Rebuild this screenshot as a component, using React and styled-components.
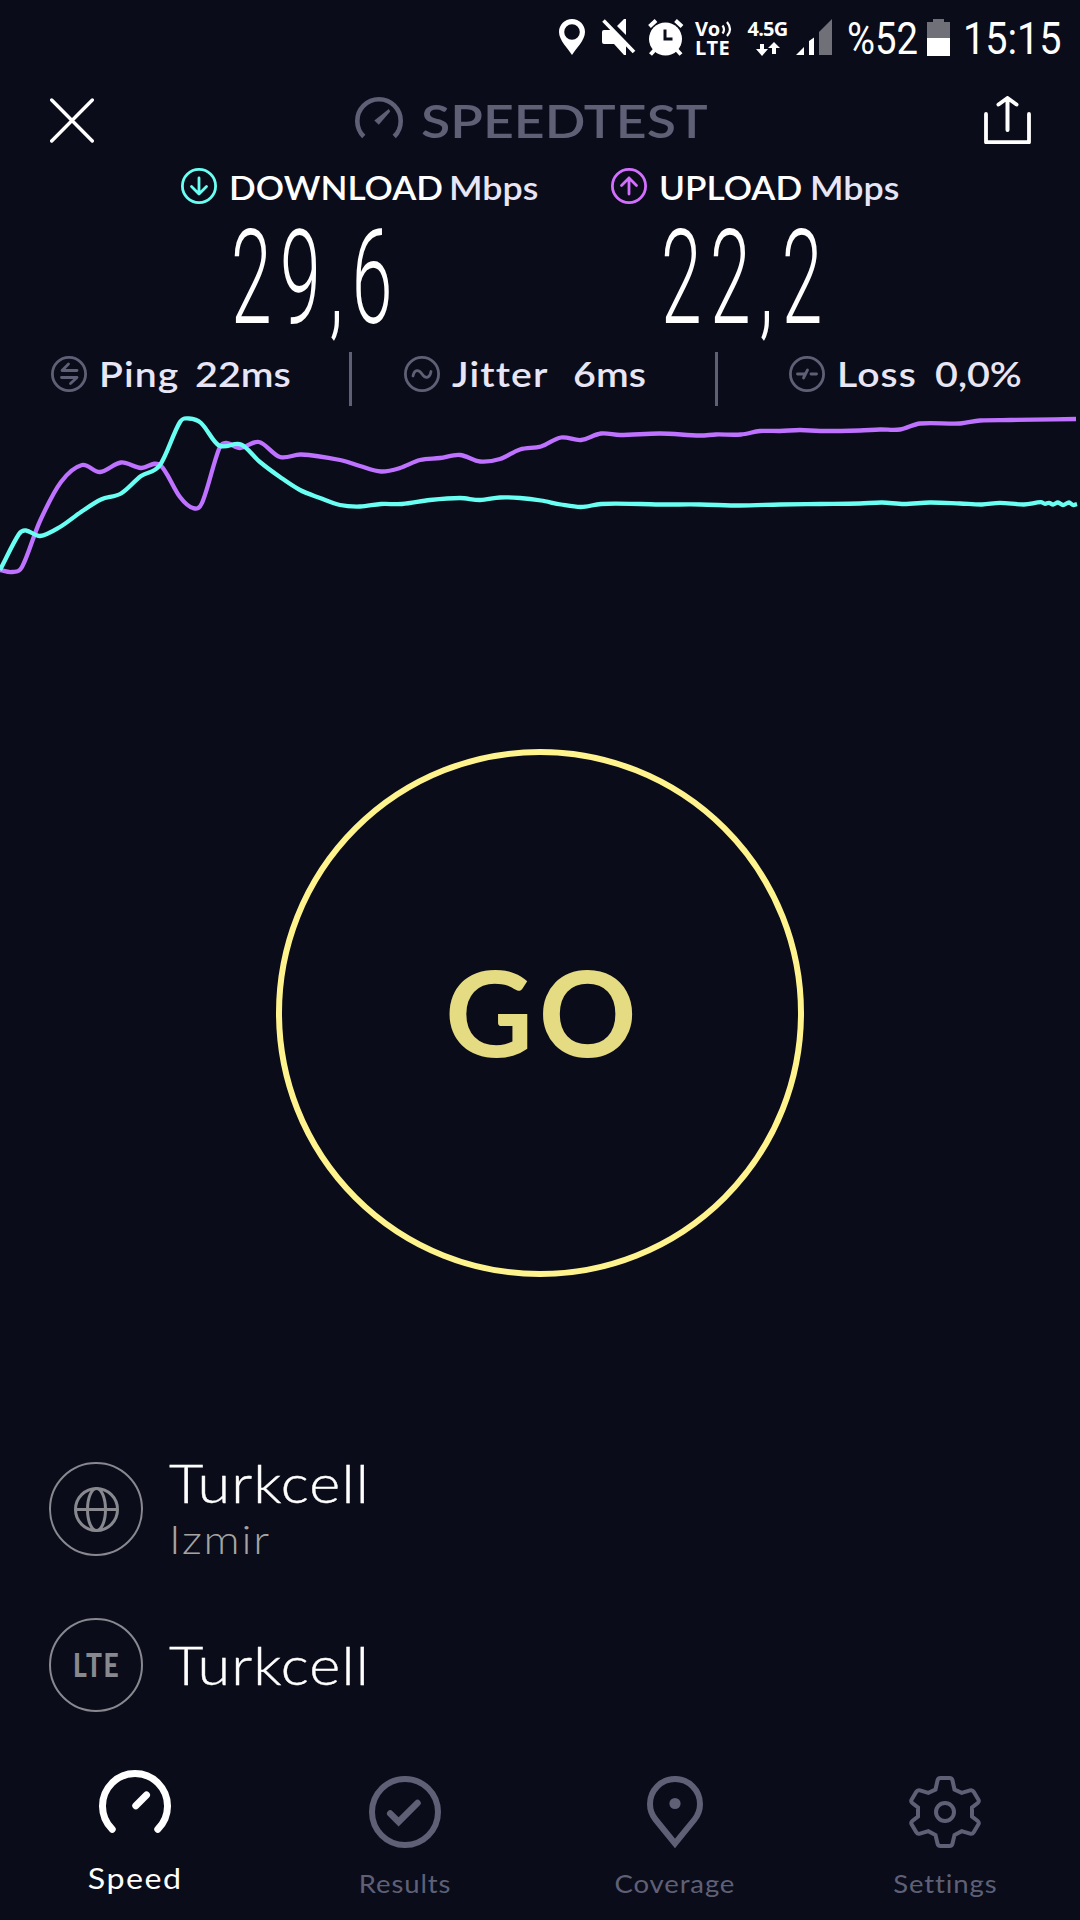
import styled, { createGlobalStyle } from "styled-components";

const colors = {
    background: "#0a0c1a",
    white: "#ffffff",
    soft: "#e8e6f6",
    muted: "#5f6076",
    gray: "#88888f",
    izmir: "#a5a4a2",
    download: "#6afff3",
    upload: "#bf71ff",
    uploadIcon: "#d36fff",
    ring: "#fff38e",
    go: "#e5db82",
};

const GlobalStyle = createGlobalStyle`
    * {
        box-sizing: border-box;
        margin: 0;
        padding: 0;
    }

    body {
        background-color: ${colors.background};
        font-family: Lato, "Liberation Sans", sans-serif;
    }

    svg {
        display: block;
        flex-shrink: 0;
    }
`

const Screen = styled.div`
    width: 1080px;
    height: 1920px;
    display: flex;
    flex-direction: column;
    overflow: hidden;
    background-color: ${colors.background};
`

// Wide geometric lettering: Lato is a little narrow, so it is stretched
const Label = styled.span`
    display: block;
    flex-shrink: 0;
    width: ${(props) => props.$width}px;
    font-size: ${(props) => props.$size}px;
    font-weight: ${(props) => props.$weight || 600};
    line-height: 1.2;
    color: ${(props) => props.$color || colors.white};
    white-space: nowrap;
    letter-spacing: ${(props) => props.$spacing || 0}px;
    transform: scaleX(${(props) => props.$stretch || 1.08});
    transform-origin: left center;
`

const StatusBar = styled.div`
    height: 74px;
    display: flex;
    align-items: center;
    padding-left: 559px;
`

const StatusIcon = styled.div`
    margin-right: ${(props) => props.$gap}px;
`

const StatusStack = styled.div`
    width: ${(props) => props.$width}px;
    height: 38px;
    padding-top: 3px;
    margin-right: ${(props) => props.$gap}px;
    display: flex;
    flex-direction: column;
    justify-content: space-between;
    align-items: ${(props) => props.$align || "flex-start"};
`

const StatusTiny = styled.div`
    display: flex;
    gap: 1px;
    height: 16px;
    font-family: "Open Sans", sans-serif;
    font-size: 20px;
    line-height: 16px;
    font-weight: 700;
    letter-spacing: ${(props) => props.$spacing || 0}px;
    color: ${colors.white};
`

const StatusText = styled.span`
    display: block;
    width: ${(props) => props.$width}px;
    margin-right: ${(props) => props.$gap || 0}px;
    padding-top: 3px;
    font-family: Roboto, sans-serif;
    font-size: 45px;
    line-height: 54px;
    color: ${colors.white};
    white-space: nowrap;
    transform: scaleX(${(props) => props.$stretch});
    transform-origin: left center;
`

const Header = styled.header`
    height: 92px;
    display: flex;
    align-items: center;
    justify-content: space-between;
    padding: 0 48px 0 50px;
`

const Brand = styled.div`
    display: flex;
    align-items: center;
    gap: 18px;
    margin-right: 17px;
`

const Results = styled.section`
    display: flex;
    padding-left: 181px;
`

const Result = styled.div`
    width: 430px;
`

const ResultTitle = styled.div`
    height: 40px;
    display: flex;
    align-items: center;
`

const ResultName = styled.div`
    display: flex;
    padding: 5px 0 0 12px;
`

const ResultValue = styled.p`
    margin: 24px 0 0 50px;
    height: 97px;
    font-family: Roboto, sans-serif;
    font-size: 131px;
    font-weight: 300;
    line-height: 97px;
    letter-spacing: 15px;
    color: ${colors.white};
    white-space: nowrap;
    transform: scaleX(0.56);
    transform-origin: left center;
`

const Stats = styled.section`
    height: 54px;
    margin-top: 25px;
    display: flex;
    padding-left: 51px;
`

const Stat = styled.div`
    width: ${(props) => props.$width}px;
    height: 44px;
    display: flex;
    align-items: center;
`

const StatName = styled(Label).attrs({ $size: 34, $color: colors.soft, $stretch: 1.15, $spacing: 1 })`
    margin-left: 12px;
`

const StatValue = styled(Label).attrs({ $size: 34, $color: colors.soft, $stretch: 1.16 })``

const Divider = styled.div`
    width: 3px;
    height: 54px;
    margin-right: ${(props) => props.$gap}px;
    background-color: ${colors.muted};
`

const ChartArea = styled.section`
    height: 184px;
`

const GoArea = styled.section`
    display: flex;
    justify-content: center;
    padding-top: 159px;
`

const GoButton = styled.button`
    width: 528px;
    height: 528px;
    display: flex;
    align-items: center;
    justify-content: center;
    padding-bottom: 3px;
    border: 6px solid ${colors.ring};
    border-radius: 50%;
    background: none;
    font-family: inherit;
    text-align: left;
`

const Servers = styled.section`
    margin-top: 185px;
    padding-left: 49px;
    display: flex;
    flex-direction: column;
    gap: 62px;
`

const Server = styled.div`
    height: 94px;
    display: flex;
    align-items: center;
    gap: 26px;
`

const Badge = styled.div`
    width: 94px;
    height: 94px;
    display: flex;
    align-items: center;
    justify-content: center;
    border: 2px solid ${colors.gray};
    border-radius: 50%;
`

const ServerText = styled.div`
    display: flex;
    flex-direction: column;
    padding-bottom: ${(props) => props.$lift || 0}px;
`

const ServerName = styled(Label).attrs({ $size: 53, $width: 200, $weight: 300, $stretch: 1.12, $spacing: 1 })`
    -webkit-text-stroke: 0.4px ${colors.white};
`

const ServerPlace = styled(Label).attrs({ $size: 40, $width: 100, $weight: 300, $stretch: 1.12, $spacing: 1.6, $color: colors.izmir })`
    margin-top: 1px;
`

const Nav = styled.nav`
    margin-top: 58px;
    height: 150px;
    display: grid;
    grid-template-columns: repeat(4, 1fr);
`

const NavItem = styled.div`
    display: flex;
    flex-direction: column;
    align-items: center;
    gap: ${(props) => (props.$active ? 28 : 18)}px;
    padding-top: ${(props) => (props.$active ? 0 : 6)}px;
`

const NavLabel = styled.span`
    font-size: ${(props) => (props.$active ? 28 : 25)}px;
    line-height: 34px;
    color: ${(props) => (props.$active ? colors.white : colors.muted)};
    letter-spacing: ${(props) => (props.$active ? 1.3 : 0.8)}px;
    transform: scaleX(${(props) => (props.$active ? 1.15 : 1.1)});
`

const PinGlyph = () => (
    <svg width="26" height="36" viewBox="0 0 26 36">
        <path fill="#fff" fillRule="evenodd" d="M13 0C5.8 0 0 5.8 0 13c0 8.5 9.5 17 13 23 3.5-6 13-14.500 13-23C26 5.800 20.200 0 13 0zm0 5.200a7.800 7.800 0 1 1 0 15.600 7.800 7.800 0 0 1 0-15.600z" />
    </svg>
)

const MuteGlyph = () => (
    <svg width="34" height="36" viewBox="0 0 34 36">
        <path fill="#fff" d="M0 13q0-2 2-2h7l15 15v10h-2L12 25H2q-2 0-2-2zM24 0v16l-9-9 7-7z" />
        <path stroke="#fff" strokeWidth="3.600" d="M1.500 1.500l30.500 31.500" />
    </svg>
)

const AlarmGlyph = () => (
    <svg width="36" height="37" viewBox="0 0 36 37">
        <circle cx="17.500" cy="20" r="16.500" fill="#fff" />
        <path stroke="#fff" strokeWidth="4" d="M1.500 7.500l6.500-6M34 7.500L27.500 1.500M7.500 30l-5 5.500M28 30l5 5.500" />
        <path fill="none" stroke={colors.background} strokeWidth="3" d="M17 10.500V20h7.500" />
    </svg>
)

const VoiceWaves = () => (
    <svg width="11" height="16" viewBox="0 0 11 16">
        <path fill="none" stroke="#fff" strokeWidth="2.200" d="M1.500 4.500q3 4 0 8M6 1q6 7.500 0 14" />
    </svg>
)

const DataArrows = () => (
    <svg width="24" height="14" viewBox="0 0 24 14">
        <path fill="#fff" d="M4 2h4v5h4l-6 7-6-7h4zM16 12h4V6h4l-6-6-6 6h4z" />
    </svg>
)

const SignalGlyph = () => (
    <svg width="36" height="36" viewBox="0 0 36 36">
        <path fill="#fff" d="M0 36l8-8v8zM13 22l5-3.500V36h-5z" />
        <path fill="#707079" d="M23 13L36 0v36H23z" />
    </svg>
)

const BatteryGlyph = () => (
    <svg width="23" height="37" viewBox="0 0 23 37">
        <path fill="#707079" d="M6 0h11v3h6v17H0V3h6z" />
        <path fill="#fff" d="M0 19h23v18H0z" />
    </svg>
)

const CloseIcon = () => (
    <svg width="44" height="45" viewBox="0 0 44 45">
        <path stroke="#fff" strokeWidth="3.400" strokeLinecap="round" d="M1.700 2l40.600 41M42.300 2L1.700 43" />
    </svg>
)

const LogoIcon = () => (
    <svg width="48" height="48" viewBox="0 0 48 48">
        <path fill="none" stroke={colors.muted} strokeWidth="4.600" d="M8.800 40.500a21.700 21.700 0 1 1 30.400 0" />
        <path fill={colors.muted} d="M19.300 24.500L33.800 13l1.400 2.500-11.400 13.300z" />
    </svg>
)

const ShareIcon = () => (
    <svg width="48" height="48" viewBox="0 0 48 48">
        <path fill="none" stroke="#fff" strokeWidth="4" strokeLinecap="round" strokeLinejoin="round" d="M23.500 34V2.500M14.500 8.500l9-6.500 9 6.500" />
        <path fill="none" stroke="#fff" strokeWidth="3.800" strokeLinecap="round" strokeLinejoin="round" d="M2 18v28.200h43V18" />
    </svg>
)

const RoundIcon = ({ color, children }) => (
    <svg width="36" height="36" viewBox="0 0 36 36" fill="none" stroke={color} strokeWidth="2.800" strokeLinecap="round" strokeLinejoin="round">
        <circle cx="18" cy="18" r="16.600" />
        {children}
    </svg>
)

const GlobeIcon = () => (
    <svg width="46" height="46" viewBox="0 0 46 46" fill="none" stroke={colors.gray} strokeWidth="3">
        <circle cx="23.500" cy="23.500" r="21" />
        <ellipse cx="23.500" cy="23.500" rx="9" ry="21" />
        <path d="M2.500 23.500h42" />
    </svg>
)

const SpeedIcon = () => (
    <svg width="72" height="63" viewBox="0 0 72 63" fill="none" stroke="#fff" strokeWidth="7" strokeLinecap="round">
        <path d="M13.200 59.200a32.500 32.500 0 1 1 45.600 0" />
        <path d="M36.800 35.800L47.500 25" />
    </svg>
)

const ResultsIcon = () => (
    <svg width="72" height="72" viewBox="0 0 72 72" fill="none" stroke={colors.muted} strokeWidth="6">
        <circle cx="36" cy="36" r="33" />
        <path strokeLinecap="round" strokeWidth="6.500" d="M21.200 37.500l8.400 8.300L48.500 27" />
    </svg>
)

const CoverageIcon = () => (
    <svg width="56" height="72" viewBox="0 0 56 72">
        <path fill="none" stroke={colors.muted} strokeWidth="6" d="M28 67.500L8.500 43.500C4.500 38.500 3 33.500 3 28a25 25 0 0 1 50 0c0 5.500-1.500 10.500-5.500 15.500z" />
        <circle cx="28" cy="27.500" r="5.600" fill={colors.muted} />
    </svg>
)

const SettingsIcon = () => (
    <svg width="72" height="72" viewBox="0 0 72 72" fill="none" stroke={colors.muted} strokeWidth="4">
        <path d="M31.500 2h9q2.500 0 3 2.500l2 9 7.200 3.300 8.300-2.400q2.500-.6 3.700 1.400l4.600 7.700q1.200 2-.6 3.500l-5.700 4.500v9l5.700 4.500q1.800 1.500.6 3.500l-4.600 7.700q-1.200 2-3.700 1.400l-8.300-2.400-7.200 3.800-2 8.500q-.5 2.500-3 2.500h-9q-2.500 0-3-2.500l-2-8.500-7.200-3.800-8.300 2.400q-2.500.6-3.700-1.400l-4.600-7.700q-1.200-2 .6-3.500L9 40.500v-9L3.300 27q-1.800-1.500-.6-3.500l4.600-7.700q1.200-2 3.700-1.400l8.300 2.400 7.200-3.300 2-9q.5-2.500 3-2.500z" />
        <circle cx="36" cy="36" r="9" />
    </svg>
)

const uploadPoints = [
    [0, 570], [12, 572], [22, 567], [40, 521], [61, 482], [82, 465], [100, 472], [121, 462.5], [141, 468], [160, 465],
    [180, 497], [193, 508], [202, 503], [219, 449], [226, 443], [240, 448], [259, 442], [280, 457], [301, 454.5], [340, 460],
    [360, 466], [381, 471.5], [400, 468], [420, 460], [440, 458], [460, 455], [480, 461.5], [500, 459], [520, 449.5],
    [541, 446.5], [561, 437.5], [581, 440], [601, 433.5], [620, 435], [660, 433.5], [700, 435.5], [716, 434.5], [741, 434.5],
    [760, 431], [780, 431], [800, 430], [820, 431], [860, 430.5], [880, 429.5], [900, 429.5], [920, 423.5], [960, 423.5],
    [980, 420.5], [1010, 420], [1076, 419],
]

const downloadPoints = [
    [0, 570], [19, 534], [26, 530.5], [40, 536], [60, 527], [81, 512], [101, 499.5], [121, 493.5], [141, 476], [160, 465],
    [180, 422], [189, 418.5], [201, 423], [219, 445.5], [241, 444.5], [260, 462], [280, 477], [300, 490], [320, 498],
    [340, 505], [360, 506.5], [381, 504], [402, 504], [430, 500], [460, 498], [480, 500], [500, 497.5], [520, 498],
    [541, 500.5], [561, 504.5], [581, 507], [601, 504], [640, 504], [660, 504.5], [700, 504.5], [740, 505.5], [780, 504.5],
    [820, 504], [860, 503.5], [882, 502.5], [904, 504], [930, 502.5], [960, 503.5], [982, 504.5], [1000, 502.8],
    [1024, 504.5], [1041, 502.2], [1045, 503.8], [1049, 502.8], [1053, 504.5], [1058, 502.5], [1063, 505], [1069, 502.5],
    [1073, 505], [1077, 504],
]

// Smooth curve through every sample
const toPath = (points) => {
    let d = `M${points[0][0]} ${points[0][1]}`;
    for (let i = 0; i < points.length - 1; i++) {
        const p0 = points[i - 1] || points[i];
        const p1 = points[i];
        const p2 = points[i + 1];
        const p3 = points[i + 2] || p2;
        const reach = (p2[0] - p1[0]) / 3;
        const s1 = (p2[1] - p0[1]) / (p2[0] - p0[0]);
        const s2 = (p3[1] - p1[1]) / (p3[0] - p1[0]);
        d += `C${p1[0] + reach} ${p1[1] + s1 * reach} ${p2[0] - reach} ${p2[1] - s2 * reach} ${p2[0]} ${p2[1]}`;
    }
    return d;
}

const Chart = () => (
    <ChartArea>
        <svg width="1080" height="184" viewBox="0 406 1080 184" fill="none" strokeWidth="4.3">
            <path stroke={colors.upload} d={toPath(uploadPoints)} />
            <path stroke={colors.download} d={toPath(downloadPoints)} />
        </svg>
    </ChartArea>
)

const navItems = [
    { name: "Speed", icon: <SpeedIcon />, active: true },
    { name: "Results", icon: <ResultsIcon /> },
    { name: "Coverage", icon: <CoverageIcon /> },
    { name: "Settings", icon: <SettingsIcon /> },
]

const App = () => {
    return (
        <Screen>
            <GlobalStyle />
            <StatusBar>
                <StatusIcon $gap={17}><PinGlyph /></StatusIcon>
                <StatusIcon $gap={12}><MuteGlyph /></StatusIcon>
                <StatusIcon $gap={11}><AlarmGlyph /></StatusIcon>
                <StatusStack $width={37} $gap={16}>
                    <StatusTiny $spacing={-0.2}>Vo<VoiceWaves /></StatusTiny>
                    <StatusTiny $spacing={0.3}>LTE</StatusTiny>
                </StatusStack>
                <StatusStack $width={39} $gap={9} $align="center">
                    <StatusTiny $spacing={-0.8}>4.5G</StatusTiny>
                    <DataArrows />
                </StatusStack>
                <StatusIcon $gap={15}><SignalGlyph /></StatusIcon>
                <StatusText $width={72} $gap={8} $stretch={0.85}>%52</StatusText>
                <StatusIcon $gap={13}><BatteryGlyph /></StatusIcon>
                <StatusText $width={98} $stretch={0.88}>15:15</StatusText>
            </StatusBar>

            <Header>
                <CloseIcon />
                <Brand>
                    <LogoIcon />
                    <Label $size={47} $width={286} $stretch={1.14} $color={colors.muted}>SPEEDTEST</Label>
                </Brand>
                <ShareIcon />
            </Header>

            <Results>
                <Result>
                    <ResultTitle>
                        <RoundIcon color={colors.download}><path d="M18 10v16M10.500 18.500L18 26l7.500-7.500" /></RoundIcon>
                        <ResultName>
                            <Label $size={32} $width={220} $stretch={1.1}>DOWNLOAD</Label>
                            <Label $size={32} $width={90} $stretch={1.12} $color={colors.soft}>Mbps</Label>
                        </ResultName>
                    </ResultTitle>
                    <ResultValue>29,6</ResultValue>
                </Result>
                <Result>
                    <ResultTitle>
                        <RoundIcon color={colors.uploadIcon}><path d="M18 26V10M10.500 17.500L18 10l7.500 7.500" /></RoundIcon>
                        <ResultName>
                            <Label $size={32} $width={151} $stretch={1.1}>UPLOAD</Label>
                            <Label $size={32} $width={90} $stretch={1.12} $color={colors.soft}>Mbps</Label>
                        </ResultName>
                    </ResultTitle>
                    <ResultValue>22,2</ResultValue>
                </Result>
            </Results>

            <Stats>
                <Stat $width={298}>
                    <RoundIcon color={colors.muted}><path d="M26 14.500H11l6.500-6.500M10.500 21.500H26l-6.500 6" /></RoundIcon>
                    <StatName $width={96}>Ping</StatName>
                    <StatValue $width={95}>22ms</StatValue>
                </Stat>
                <Divider $gap={52} />
                <Stat $width={311}>
                    <RoundIcon color={colors.muted}><path d="M9 20c1.500-7 6-6.500 9-2s7.500 5 9-2.500" /></RoundIcon>
                    <StatName $width={121}>Jitter</StatName>
                    <StatValue $width={80}>6ms</StatValue>
                </Stat>
                <Divider $gap={71} />
                <Stat $width={240}>
                    <RoundIcon color={colors.muted}><path d="M8.500 18h7M14.500 22l4-8M22 18h5.500" /></RoundIcon>
                    <StatName $width={98}>Loss</StatName>
                    <StatValue $width={95}>0,0%</StatValue>
                </Stat>
            </Stats>

            <Chart />

            <GoArea>
                <GoButton>
                    <Label $size={118} $width={190} $weight={700} $stretch={1.03} $spacing={5} $color={colors.go}>GO</Label>
                </GoButton>
            </GoArea>

            <Servers>
                <Server>
                    <Badge><GlobeIcon /></Badge>
                    <ServerText $lift={4}>
                        <ServerName>Turkcell</ServerName>
                        <ServerPlace>Izmir</ServerPlace>
                    </ServerText>
                </Server>
                <Server>
                    <Badge><Label $size={33} $width={46} $weight={900} $color={colors.gray} $stretch={0.8} $spacing={2}>LTE</Label></Badge>
                    <ServerText>
                        <ServerName>Turkcell</ServerName>
                    </ServerText>
                </Server>
            </Servers>

            <Nav>
                {navItems.map((item) => (
                    <NavItem key={item.name} $active={item.active}>
                        {item.icon}
                        <NavLabel $active={item.active}>{item.name}</NavLabel>
                    </NavItem>
                ))}
            </Nav>
        </Screen>
    )
}

export default App;
